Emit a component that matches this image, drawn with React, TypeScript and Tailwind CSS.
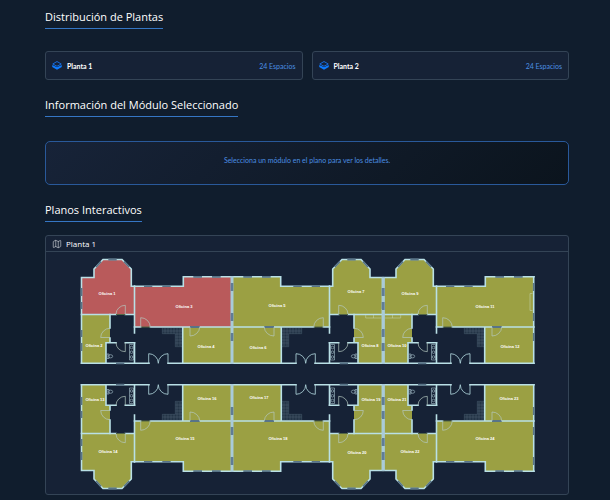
import type { ReactNode } from "react";
import { Map } from "lucide-react";

const plantas = [
  { nombre: "Planta 1", espacios: 24 },
  { nombre: "Planta 2", espacios: 24 },
];

const oficinas = [
  { n: 1, x: 107, y: 294 },
  { n: 2, x: 94, y: 346 },
  { n: 3, x: 184, y: 307 },
  { n: 4, x: 206, y: 347 },
  { n: 5, x: 277, y: 306 },
  { n: 6, x: 258, y: 348 },
  { n: 7, x: 356, y: 292 },
  { n: 8, x: 370, y: 346 },
  { n: 9, x: 410, y: 294 },
  { n: 10, x: 397, y: 346 },
  { n: 11, x: 485, y: 307 },
  { n: 12, x: 510, y: 347 },
  { n: 13, x: 95, y: 400 },
  { n: 14, x: 108, y: 452 },
  { n: 15, x: 185, y: 439 },
  { n: 16, x: 207, y: 399 },
  { n: 17, x: 259, y: 398 },
  { n: 18, x: 278, y: 439 },
  { n: 19, x: 371, y: 400 },
  { n: 20, x: 357, y: 453 },
  { n: 21, x: 397, y: 400 },
  { n: 22, x: 410, y: 452 },
  { n: 23, x: 509, y: 399 },
  { n: 24, x: 485, y: 439 },
];

const LIBRE = "#9ba043";
const OCUPADO = "#b95a5b";

function LayersIcon() {
  return (
    <svg viewBox="0 0 20 18" className="h-[9px] w-[10px] shrink-0" aria-hidden="true">
      <path d="M10 1 L18.5 6 L10 10.5 L1.5 6 Z" fill="none" stroke="#1769d8" strokeWidth="2" />
      <path d="M0.5 8 L10 12.5 L19.5 8 V12 L10 17.5 L0.5 12 Z" fill="#0d7bff" />
    </svg>
  );
}

function Titulo({ children }: { children: ReactNode }) {
  return (
    <h2 className="w-fit border-b border-[#3576c4] pb-[3px] font-['Open_Sans',sans-serif] text-[11px] leading-4 text-white">
      {children}
    </h2>
  );
}

// Un ala del edificio; las demás se obtienen por reflexión o traslación
function Ala({ transform, color = LIBRE }: { transform?: string; color?: string }) {
  return (
    <g transform={transform}>
      {/* Salas */}
      <path d="M81.5 277.5H94V269L103 259.5H122L131.3 269V286H134.5V314.5H81.5Z" fill={color} />
      <path d="M134.5 286.3H183.3V277H232V327H134.5Z" fill={color} />
      <path d="M81.5 314.5H110V342.7H106V363.3H81.5Z" fill={LIBRE} />
      <path d="M182.7 327H232V363.3H182.7Z" fill={LIBRE} />

      {/* Escalera */}
      <path d="M162.3 328H182.7V346.7H175.3V333.7H162.3Z" fill="#233446" />
      <path
        d="M162.3 328V333.7H175.3V346.7H182.7M165 328V333.7M168 328V333.7M171 328V333.7M174 328V333.7M177 328V346M180 328V346M162.3 331H182.7M175.3 334H182.7M175.3 337H182.7M175.3 340H182.7M175.3 343H182.7"
        fill="none"
        stroke="#566a7c"
        strokeWidth="0.4"
      />

      {/* Muros */}
      <g fill="none" stroke="#b9e0e6" strokeWidth="1.6" strokeLinecap="square">
        <path d="M81.5 363.3V277.5H94V269L103 259.5H122L131.3 269V286.2H183.3V276.8H232" />
        <path d="M81.5 363.3H149M168 363.3H232" />
        <path d="M81.5 314.5H116M125.3 314.5H134.5M134.5 286V333M134.5 342.7V363.3" />
        <path d="M134.5 327H140.7M150.3 327H232M182.7 327V363.3" />
        <path d="M110 314.5V328M110 338V342.7M106 363.3V342.7H116M125.3 342.7H134.5" />
      </g>

      {/* Ventanas */}
      <path
        d="M144 286.2H152.3M162.3 286.2H170.7M193.3 276.8H202M212 276.8H220.7M108.3 259.5H116.7M96 267L101 261.5M124 261.5L129.3 267M81.5 288V296M81.5 302V309M81.5 330V337M81.5 343V351M116 363.3H124.3M190 327H199.7"
        fill="none"
        stroke="#587488"
        strokeWidth="1.8"
      />
      <path d="M116 314.5H125.3M140.7 327H150.3" stroke="#536645" strokeWidth="1.2" />

      {/* Puertas */}
      <g fill="none" stroke="#b4c8c0" strokeWidth="0.7">
        <path d="M125.3 314V305.3A9.3 9 0 0 0 116 314" />
        <path d="M140.7 327V317.7A9.6 9.6 0 0 1 150.3 327" />
        <path d="M190 327V336A9.6 9.3 0 0 0 199.7 327" />
        <path d="M110 337.5H100.7A9.3 9.3 0 0 1 110 328.3" />
        <path d="M125.3 342.7V351.7A9.3 9 0 0 1 116 342.7" />
      </g>
      <path
        d="M148.7 363.3V353.7A9.6 9.6 0 0 1 158.3 363.3A9.6 9.6 0 0 1 168 353.7V363.3"
        fill="none"
        stroke="#b5dce2"
        strokeWidth="0.8"
      />

      {/* Baño */}
      <g fill="none" stroke="#a9c5cf" strokeWidth="0.6">
        <path d="M107 354H109V358.5H107Z" />
        <ellipse cx="110.5" cy="356.3" rx="2.2" ry="1.6" />
        <path d="M129.5 344.5H133.5V360H129.5Z" />
        <circle cx="131.5" cy="347.5" r="1.3" />
        <circle cx="131.5" cy="352.2" r="1.3" />
        <circle cx="131.5" cy="357" r="1.3" />
      </g>
    </g>
  );
}

function Plano() {
  return (
    <svg viewBox="46 252 522 242" className="block w-full" role="img" aria-label="Planta 1">
      <Ala color={OCUPADO} />
      <Ala transform="matrix(-1 0 0 1 464 0)" />
      <Ala transform="translate(302 0)" />
      <Ala transform="matrix(1 0 0 -1 0 748)" />
      <Ala transform="matrix(-1 0 0 -1 464 748)" />
      <Ala transform="matrix(1 0 0 -1 302 748)" />

      {/* Muros medianeros */}
      <path
        d="M232 276V364M232 384V472M383.3 277V364M383.3 384V471"
        stroke="#a9cbd9"
        strokeWidth="3"
      />
      <path
        d="M232 283V291M232 313V321M232 333V341M232 407V415M232 427V435M232 457V465M383.3 288V296M383.3 302V310M383.3 329V337M383.3 343V351M383.3 397V405M383.3 411V419M383.3 438V446M383.3 452V460"
        stroke="#607d97"
        strokeWidth="2.6"
      />
      <path d="M533.7 276V364M533.7 384V472" stroke="#b9e0e6" strokeWidth="1.6" />
      <path
        d="M533.7 283V291M533.7 313V321M533.7 333V341M533.7 407V415M533.7 427V435M533.7 457V465"
        stroke="#587488"
        strokeWidth="1.6"
      />

      {/* Armarios */}
      <path
        d="M365.7 315V318H381.5M373.5 315V318M385 318H400.7V315M392.5 315V318M532.5 293.5H530V310.5H532.5"
        fill="none"
        stroke="#c3d2a4"
        strokeWidth="0.6"
      />

      <g
        fill="#ffffff"
        textAnchor="middle"
        className="font-['Liberation_Sans',sans-serif] text-[4px] font-bold"
      >
        {oficinas.map((o) => (
          <text key={o.n} x={o.x} y={o.y + 1}>
            Oficina {o.n}
          </text>
        ))}
      </g>
    </svg>
  );
}

export default function App() {
  return (
    <main className="min-h-screen bg-[#101d2d] pt-[9px] pr-[41px] pb-[5px] pl-[45px] font-['Lato',sans-serif]">
      <Titulo>Distribución de Plantas</Titulo>
      <div className="mt-[22px] grid grid-cols-2 gap-[9px]">
        {plantas.map((p) => (
          <div
            key={p.nombre}
            className="flex h-[29px] items-center gap-[5px] rounded-[3px] border border-[#344456] bg-[#162236] px-[6px]"
          >
            <LayersIcon />
            <span className="text-[7px] leading-3 font-bold text-white">{p.nombre}</span>
            <span className="ml-auto text-[7px] leading-3 text-[#4b8fe2]">{p.espacios} Espacios</span>
          </div>
        ))}
      </div>

      <div className="mt-[17px]">
        <Titulo>Información del Módulo Seleccionado</Titulo>
      </div>
      <div className="mt-[24px] h-[44px] rounded-[5px] border border-[#29599a] bg-linear-[135deg] from-[#172338] to-[#0b141d] pt-[12px] text-center">
        <p className="text-[7px] leading-3 text-[#4b8fe2]">
          Selecciona un módulo en el plano para ver los detalles.
        </p>
      </div>

      <div className="mt-[17px]">
        <Titulo>Planos Interactivos</Titulo>
      </div>
      <section className="mt-[13px] overflow-hidden rounded-[3px] border border-[#344456] bg-[#162236]">
        <h3 className="flex h-4 items-center gap-1 border-b border-[#344456] px-[6px] font-['Open_Sans',sans-serif] text-[8px] text-white">
          <Map size={10} strokeWidth={1.5} className="text-gray-300" />
          Planta 1
        </h3>
        <Plano />
      </section>
    </main>
  );
}
